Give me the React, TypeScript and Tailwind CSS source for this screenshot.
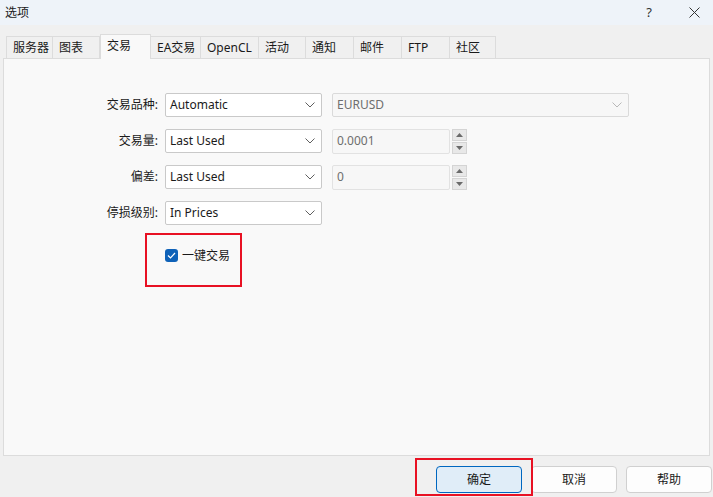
import React from "react";

const tabs: { label: string; width: string; active?: boolean }[] = [
  { label: "服务器", width: "w-[47px]" },
  { label: "图表", width: "w-[47px]" },
  { label: "交易", width: "w-[51px]", active: true },
  { label: "EA交易", width: "w-[50px]" },
  { label: "OpenCL", width: "w-[58px]" },
  { label: "活动", width: "w-[47px]" },
  { label: "通知", width: "w-[48px]" },
  { label: "邮件", width: "w-[48px]" },
  { label: "FTP", width: "w-[48px]" },
  { label: "社区", width: "w-[46px]" },
];

function Chevron({ light }: { light?: boolean }) {
  return (
    <svg width="10" height="6" viewBox="0 0 10 6" aria-hidden="true">
      <polyline
        points="0.5,0.5 5,5 9.5,0.5"
        fill="none"
        stroke={light ? "#b8b8b8" : "#5f5f5f"}
        strokeWidth="1"
      />
    </svg>
  );
}

function Select({ value }: { value: string }) {
  return (
    <div className="flex h-[24px] w-[157px] items-center justify-between rounded-[2px] border border-[#c9c9c9] bg-white pl-[4px] pr-[6px] text-[#1a1a1a]">
      <span>{value}</span>
      <Chevron />
    </div>
  );
}

function Spin({ value }: { value: string }) {
  return (
    <div className="flex items-center gap-[2px]">
      <div className="flex h-[25px] w-[118px] items-center rounded-[2px] border border-[#e2e2e2] bg-[#f7f7f7] pl-[4px] text-[#6e6e6e]">
        {value}
      </div>
      <div className="flex h-[25px] w-[15px] flex-col gap-[1px]">
        <div className="flex flex-1 items-center justify-center border border-[#d4d4d4] bg-[#e8e8e8]">
          <svg width="7" height="4" viewBox="0 0 7 4" aria-hidden="true">
            <polygon points="3.5,0 7,4 0,4" fill="#6a6a6a" />
          </svg>
        </div>
        <div className="flex flex-1 items-center justify-center border border-[#d4d4d4] bg-[#e8e8e8]">
          <svg width="7" height="4" viewBox="0 0 7 4" aria-hidden="true">
            <polygon points="0,0 7,0 3.5,4" fill="#6a6a6a" />
          </svg>
        </div>
      </div>
    </div>
  );
}

function Row({ label, children }: { label: string; children: React.ReactNode }) {
  return (
    <div className="flex h-[24px] items-center">
      <div className="w-[155px] pr-[1px] text-right text-[#1a1a1a]">{label}</div>
      <div className="ml-[6px] flex items-center gap-[10px]">{children}</div>
    </div>
  );
}

export default function App() {
  return (
    <div
      className="relative flex h-[497px] w-[713px] flex-col overflow-hidden bg-[#f0f0f0] text-[12px] leading-none text-[#1a1a1a]"
      style={{ fontFamily: '"Noto Sans", "Noto Sans CJK SC", sans-serif' }}
    >
      <div className="flex h-[25px] items-center justify-between bg-[#eef3f9] pl-[5px] pr-[13px]">
        <span className="text-[12px]">选项</span>
        <div className="flex items-center gap-[37px]">
          <span className="text-[13px] text-[#333]">?</span>
          <svg width="11" height="11" viewBox="0 0 11 11" aria-hidden="true">
            <path d="M0.5 0.5 L10.5 10.5 M10.5 0.5 L0.5 10.5" stroke="#333" strokeWidth="1" />
          </svg>
        </div>
      </div>

      <div className="flex h-[33px] items-end pl-[6px]">
        {tabs.map((tab) => (
          <div
            key={tab.label}
            className={`flex items-center border-[#dcdcdc] pl-[6px] ${tab.width} ${
              tab.active
                ? "relative z-10 -mb-[1px] h-[25px] border-x border-t bg-[#f9f9f9] pb-[3px]"
                : "h-[22px] border-t border-r bg-[#f0f0f0]"
            } ${tab.label === "服务器" ? "border-l" : ""}`}
          >
            {tab.label}
          </div>
        ))}
      </div>

      <div className="mx-[3px] flex h-[398px] flex-col border border-[#dcdcdc] bg-[#f9f9f9] pt-[34px]">
        <div className="flex flex-col gap-[12px]">
          <Row label="交易品种:">
            <Select value="Automatic" />
            <div className="flex h-[24px] w-[297px] items-center justify-between rounded-[2px] border border-[#dadada] bg-[#f7f7f7] pl-[4px] pr-[6px] text-[#6e6e6e]">
              <span>EURUSD</span>
              <Chevron light />
            </div>
          </Row>
          <Row label="交易量:">
            <Select value="Last Used" />
            <Spin value="0.0001" />
          </Row>
          <Row label="偏差:">
            <Select value="Last Used" />
            <Spin value="0" />
          </Row>
          <Row label="停损级别:">
            <Select value="In Prices" />
          </Row>
        </div>

        <div className="ml-[141px] mt-[8px] flex h-[54px] w-[97px] items-start border-2 border-[#e81123] pl-[18px] pt-[14px]">
          <div className="flex items-center gap-[4px]">
            <div className="flex h-[13px] w-[13px] items-center justify-center rounded-[3px] bg-[#0f62b8]">
              <svg width="9" height="7" viewBox="0 0 9 7" aria-hidden="true">
                <polyline points="1,3.5 3.5,6 8,1" fill="none" stroke="#fff" strokeWidth="1.2" />
              </svg>
            </div>
            <span>一键交易</span>
          </div>
        </div>
      </div>

      <div className="flex flex-1 items-start justify-end gap-[9px] pr-[1px] pt-[10px]">
        <button
          type="button"
          className="flex h-[27px] w-[86px] items-center justify-center rounded-[4px] border border-[#0067c0] bg-[#e0edf8]"
        >
          确定
        </button>
        <button
          type="button"
          className="flex h-[27px] w-[86px] items-center justify-center rounded-[4px] border border-[#d0d0d0] bg-[#fdfdfd]"
        >
          取消
        </button>
        <button
          type="button"
          className="flex h-[27px] w-[86px] items-center justify-center rounded-[4px] border border-[#d0d0d0] bg-[#fdfdfd]"
        >
          帮助
        </button>
      </div>

      <div className="pointer-events-none absolute left-[415px] top-[458px] h-[38px] w-[118px] border-2 border-[#e81123]" />
    </div>
  );
}
